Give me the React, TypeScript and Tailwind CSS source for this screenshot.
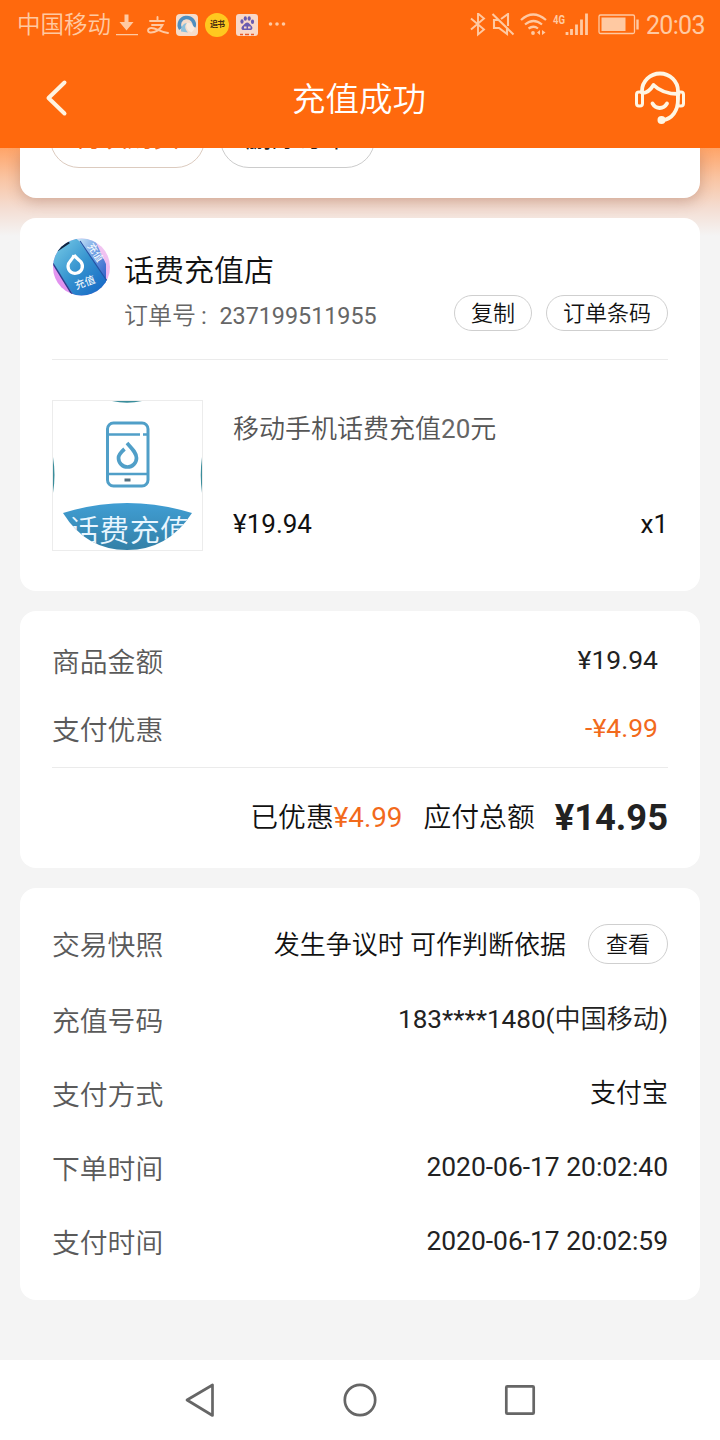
import React from "react";

const cardShell = "mx-5 rounded-2xl bg-white";

function StatusBar() {
  return (
    <div className="flex h-12 items-center pt-[2px] pl-[17px] pr-[16px] text-[#ffc9a2]">
      <span className="w-[94px] pt-px text-[23.500px] font-[350] leading-none whitespace-nowrap">中国移动</span>
      <svg className="ml-[4px] h-6 w-6" viewBox="0 0 24 24" fill="currentColor">
        <path d="M9.500 1.500h4V9h5L11.500 17.500 4.500 9h5zM1 21h22v1.300H1z" />
      </svg>
      <svg className="ml-[7px] h-6 w-6" viewBox="0 0 24 24" fill="none" stroke="currentColor" strokeWidth="1.900" strokeLinecap="round">
        <path d="M4 8h14M11.500 4v4M6 12h10.500C14.500 16.500 9 20 4 19.500 1 19 1.500 15 5.500 15c5 0 8 4 16.500 5" />
      </svg>
      <svg className="ml-[6px] h-[22px] w-[22px]" viewBox="0 0 22 22">
        <rect width="22" height="22" rx="4" fill="#f6dccb" />
        <path d="M4.500 15A7.500 7.500 0 1 1 18 13" fill="none" stroke="#4f8fc0" strokeWidth="3.500" />
        <path d="M5 17.500C5 12 8 9 11 9c-3 3-2 6 1 9.500z" fill="#8cc0dc" />
        <path d="M11 9c4-1 7 3 7.500 6l-3 3.500C12 17 9 13 11 9z" fill="#f9ebe0" />
      </svg>
      <span className="ml-[7px] flex h-6 w-6 items-center justify-center rounded-full bg-[#ffc81f] text-[8px] font-bold tracking-[-1px] text-[#4a2c10]">追书</span>
      <svg className="ml-[7px] h-[22px] w-[22px]" viewBox="0 0 22 22">
        <rect width="22" height="22" rx="3" fill="#f9d8c8" />
        <g fill="#6a5bb0">
          <ellipse cx="6" cy="7.500" rx="1.600" ry="2.200" />
          <ellipse cx="9.300" cy="4.500" rx="1.600" ry="2.300" />
          <ellipse cx="13.200" cy="4.500" rx="1.600" ry="2.300" />
          <ellipse cx="16.500" cy="7.800" rx="1.600" ry="2.200" />
          <path d="M11 8.500c2 0 3 2 4.500 3.500 2 2 .5 4.500-2 4H8.500c-3 .5-4-2-2-4C8 11 9 8.500 11 8.500z" />
        </g>
        <path d="M8 12.500h2.500v2H8zM12 12.500h2.500v2H12z" fill="#f9d8c8" />
        <path d="M4 20.500h3M9 20.500h4M15 20.500h3" stroke="#e85a28" strokeWidth="1.500" />
      </svg>
      <svg className="ml-[10px] h-4 w-[20px]" viewBox="0 0 20 16" fill="currentColor">
        <circle cx="2.500" cy="7" r="1.800" /><circle cx="9" cy="7" r="1.800" /><circle cx="15.500" cy="7" r="1.800" />
      </svg>
      <div className="flex-1" />
      <svg className="h-6 w-[176px]" viewBox="470 13 176 24" fill="none" stroke="currentColor" strokeWidth="1.900">
        <path d="M471 18.500l13 11-6 5V13.500l6 5-13 11" />
        <path d="M499 20h-5v8h5l8 6V28M501 19l7-5v12M492.500 14l21 20.500" strokeWidth="2.100" />
        <path d="M521 20q12-11 25 0M525 24.500q8.500-7 17 0M528.500 28.500q5-3.500 9.500 0" strokeWidth="2.200" />
        <circle cx="533" cy="33" r="1.900" fill="currentColor" stroke="none" />
        <path d="M540 30l-3 2.500 3 2.500zM542 30l3.500 2.500-3.500 2.500z" fill="currentColor" stroke="none" />
        <text x="553" y="23.500" fontSize="12.500" fontWeight="bold" fontFamily="Roboto, sans-serif" fill="currentColor" stroke="none" textLength="12" lengthAdjust="spacingAndGlyphs">4G</text>
        <path d="M567 32v3M571.500 29v6M576.500 24.500v10.500M581.500 19.500v15.500M586.500 13.500v21.500" strokeWidth="2.800" />
        <rect x="599" y="15" width="35.500" height="18.500" rx="1.500" strokeWidth="1.300" />
        <rect x="601.500" y="17.500" width="24" height="13.500" fill="currentColor" stroke="none" />
        <path d="M637.500 19.500v10" strokeWidth="2.400" />
      </svg>
      <span className="w-[58px] text-right text-[25px] leading-none tracking-[-0.700px] whitespace-nowrap">20:03</span>
    </div>
  );
}

function Header() {
  return (
    <div className="flex h-[100px] items-center justify-between text-white">
      <svg className="h-[100px] w-[100px]" viewBox="0 0 100 100" fill="none" stroke="#fff3e0" strokeWidth="4" strokeLinecap="round" strokeLinejoin="round">
        <path d="M64.500 34.500L48.500 50l16 15.500" />
      </svg>
      <h1 className="pt-[4px] pr-[2px] text-[33.500px] font-[350] leading-none">充值成功</h1>
      <svg className="h-[100px] w-[100px]" viewBox="620 48 100 100" fill="none" stroke="#fff6e4" strokeWidth="3.800" strokeLinecap="round" strokeLinejoin="round">
        <path d="M642 92v-1a18 17.500 0 0 1 36 0v8c0 12-6 20-15 21" />
        <path d="M642.500 93c5 0 8-3 11-8 5 5 13 9 25 9" />
        <rect x="636.500" y="92" width="6" height="14" rx="2.500" strokeWidth="3" />
        <rect x="677.500" y="92" width="6" height="14" rx="2.500" strokeWidth="3" />
        <path d="M652.500 103.500c3.500 6 11 6 14.500 0" />
        <circle cx="661.500" cy="120" r="4" fill="#fff6e4" stroke="none" />
      </svg>
    </div>
  );
}

function ShopAvatar() {
  return (
    <svg className="h-[58px] w-[58px] shrink-0" viewBox="0 0 58 58">
      <defs>
        <clipPath id="avatarClip"><circle cx="29.500" cy="29" r="28.500" /></clipPath>
        <linearGradient id="avatarPhone" x1="0" y1="0" x2="1" y2="1">
          <stop offset="0" stopColor="#7dcfe8" /><stop offset="0.500" stopColor="#3593cf" /><stop offset="1" stopColor="#1262c4" />
        </linearGradient>
        <linearGradient id="avatarBack" x1="0" y1="1" x2="1" y2="0">
          <stop offset="0" stopColor="#dd84ee" /><stop offset="1" stopColor="#f5d0f2" />
        </linearGradient>
        <linearGradient id="avatarRear" x1="0" y1="0" x2="1" y2="1">
          <stop offset="0" stopColor="#cfeaf8" /><stop offset="0.500" stopColor="#6a9be2" /><stop offset="1" stopColor="#2a56c4" />
        </linearGradient>
      </defs>
      <g clipPath="url(#avatarClip)">
        <rect width="58" height="58" fill="url(#avatarBack)" />
        <path d="M24 0h18l12 26v22L50 36z" fill="url(#avatarRear)" />
        <path d="M2 14L19 1q5-2 8 2l28 39-8 16H22L0 24z" fill="url(#avatarPhone)" />
        <path d="M0 24l21 34" stroke="#2a3f8c" strokeWidth="1.500" />
        <path d="M28 3l27 40" stroke="#2353a4" strokeWidth="1.200" />
        <path d="M5 12l12-8" stroke="#10233e" strokeWidth="3" />
        <path d="M22 17c-1 5-6 6-6 11 0 6 5 8 9 7 5-1 7-7 4-11-2-2-5-4-7-7" fill="none" stroke="#fff" strokeWidth="3.200" strokeLinejoin="round" />
        <text x="23" y="50" fill="#fff" fontSize="10.500" transform="rotate(-20 28 47)">充值</text>
        <text x="35" y="8" fill="#fff" fontSize="10" transform="rotate(57 35 8)">充值</text>
      </g>
    </svg>
  );
}

function ProductPicture() {
  return (
    <svg className="h-[151px] w-[151px] shrink-0 border border-[#ececec]" viewBox="0 0 149 149">
      <defs>
        <linearGradient id="productFill" x1="0" y1="0" x2="0" y2="1">
          <stop offset="0" stopColor="#419fd5" /><stop offset="1" stopColor="#3380a7" />
        </linearGradient>
        <clipPath id="bandClip"><path d="M10 112q64-20 129 0q-24 37-65 37T10 112z" /></clipPath>
      </defs>
      <path d="M59 0q15 3.500 30 0z" fill="#3a8d9b" />
      <path d="M0 56q3 18 0 36zM149 56q-2.500 18 0 36z" fill="#3a8d9b" />
      <g fill="none" stroke="#509fc8" strokeWidth="3">
        <rect x="54.500" y="22" width="40.500" height="63" rx="6" />
        <path d="M56 33.500h31M90 33.500h4M56 73h38" strokeWidth="2.500" />
        <path d="M71.500 48C67 52 65.500 54 65.500 57a9 9 0 0 0 18 0c0-5-4-9-9.500-15" strokeWidth="3.700" />
        <path d="M71.500 79h6" stroke="#55707f" />
      </g>
      <g clipPath="url(#bandClip)">
        <rect y="100" width="149" height="49" fill="url(#productFill)" />
        <text x="16" y="140" fill="#e9f6ff" fontSize="30" textLength="121" className="font-[350]">话费充值</text>
      </g>
    </svg>
  );
}

const pill = "flex items-center justify-center rounded-full border border-[#cfcfcf] pt-[2px] font-[350] leading-none text-[#111]";

function Label({ children }: { children: string }) {
  return <span className="text-[27.800px] font-[350] leading-[40px] text-[#5a5a5a]">{children}</span>;
}

function Row({ label, children }: { label: string; children: React.ReactNode }) {
  return (
    <div className="flex h-[74px] items-center justify-between">
      <div className="pt-[5px]"><Label>{label}</Label></div>
      {children}
    </div>
  );
}

export default function App() {
  return (
    <div className="flex h-[1440px] w-[720px] flex-col overflow-hidden bg-[#f4f4f4] font-['Roboto','Noto_Sans_CJK_SC',sans-serif] text-[#222]">
      <header className="h-[148px] shrink-0 bg-[#ff690d]">
        <StatusBar />
        <Header />
      </header>
      <main className="flex h-[1212px] shrink-0 flex-col overflow-hidden bg-[linear-gradient(to_bottom,#ffa468_0px,#f9c4a2_30px,#f4ddd2_60px,#f4f4f4_88px)]">
        <section className="mx-5 flex h-[50px] shrink-0 items-end gap-[15px] rounded-b-2xl bg-white pb-[30px] pl-[30px] shadow-[0_4px_14px_rgba(110,60,50,0.28)]">
          <div className="flex h-[20px] w-[155px] items-end overflow-hidden">
            <div className="flex h-[58px] w-full shrink-0 items-center justify-center rounded-[29px] border border-[#dccbbf] pb-[2px] text-[26px] leading-none text-[#f26a1c]">再次购买</div>
          </div>
          <div className="flex h-[20px] w-[155px] items-end overflow-hidden">
            <div className="flex h-[58px] w-full shrink-0 items-center justify-center rounded-[29px] border border-[#ccc] pb-[2px] text-[26px] leading-none">删除订单</div>
          </div>
        </section>

        <section className={cardShell + " mt-5 h-[373px] shrink-0 px-8"}>
          <div className="flex h-[142px] border-b border-[#ebebeb] pt-5">
            <ShopAvatar />
            <div className="ml-[14px] flex-1">
              <div className="pt-[15px] text-[30px] font-[350] leading-[36px] text-[#111]">话费充值店</div>
              <div className="mt-[6px] flex h-9 items-start justify-between">
                <div className="flex pt-[3px] leading-[36px] whitespace-nowrap text-[#666]">
                  <span className="w-[75px] text-[24px] font-[350]">订单号</span>
                  <span className="w-[20.500px] pl-[2px] text-[24px]">:</span>
                  <span className="text-[23.300px]">237199511955</span>
                </div>
                <div className="flex gap-[14px] text-[22px]">
                  <button className={pill + " h-9 w-[78px]"}>复制</button>
                  <button className={pill + " h-9 w-[122px]"}>订单条码</button>
                </div>
              </div>
            </div>
          </div>
          <div className="flex pt-[40px]">
            <ProductPicture />
            <div className="ml-[30px] flex flex-1 flex-col text-[26px]">
              <div className="pt-[10px] font-[350] leading-[38px] text-[#555]">移动手机话费充值<span className="font-normal text-[#666]">20</span>元</div>
              <div className="flex justify-between pt-[57px] leading-[38px] text-[#111]">
                <span>¥19.94</span>
                <span>x1</span>
              </div>
            </div>
          </div>
        </section>

        <section className={cardShell + " mt-5 h-[257px] shrink-0 px-8"}>
          <div className="flex h-[157px] flex-col border-b border-[#ebebeb] pt-[15px] pr-[10px]">
            <div className="flex h-[68px] items-center justify-between">
              <div className="pt-[5px]"><Label>商品金额</Label></div>
              <span className="text-[26.500px]">¥19.94</span>
            </div>
            <div className="flex h-[68px] items-center justify-between">
              <div className="pt-[5px]"><Label>支付优惠</Label></div>
              <span className="text-[26.500px] text-[#f26a1c]">-¥4.99</span>
            </div>
          </div>
          <div className="flex h-[99px] items-center justify-end pt-px text-[27.800px] font-[350] text-[#111]">
            <span>已优惠<span className="font-normal text-[#f26a1c]">¥4.99</span></span>
            <span className="ml-[21px]">应付总额</span>
            <span className="ml-[20px] text-[36.300px] font-bold text-[#222]">¥14.95</span>
          </div>
        </section>

        <section className={cardShell + " mt-[20px] h-[412px] shrink-0 px-8 pt-[20px]"}>
          <div className="flex h-[72px] items-center">
            <div className="pt-[3px]"><Label>交易快照</Label></div>
            <span className="ml-auto pt-[3px] text-[26px] font-[350] text-[#111]">发生争议时 可作判断依据</span>
            <button className={pill + " ml-[22px] h-10 w-20 text-[22px]"}>查看</button>
          </div>
          <div className="flex flex-col pt-[2px]">
            <Row label="充值号码">
              <span className="pt-px text-[26.100px]">183****1480(<span className="font-[350]">中国移动</span>)</span>
            </Row>
            <Row label="支付方式">
              <span className="pt-px text-[26px] font-[350] text-[#111]">支付宝</span>
            </Row>
            <Row label="下单时间">
              <span className="pt-[2px] text-[26.400px]">2020-06-17 20:02:40</span>
            </Row>
            <Row label="支付时间">
              <span className="pt-[2px] text-[26.400px]">2020-06-17 20:02:59</span>
            </Row>
          </div>
        </section>
      </main>
      <nav className="flex h-20 shrink-0 items-center justify-center gap-[120px] bg-white">
        <svg className="h-10 w-10" viewBox="0 0 40 40" fill="none" stroke="#666" strokeWidth="2.700" strokeLinejoin="round"><path d="M7 20L32.500 5v30.500z" /></svg>
        <svg className="h-10 w-10" viewBox="0 0 40 40" fill="none" stroke="#666" strokeWidth="2.700"><circle cx="20" cy="20" r="15.200" /></svg>
        <svg className="h-10 w-10" viewBox="0 0 40 40" fill="none" stroke="#666" strokeWidth="2.700" strokeLinejoin="round"><rect x="6.300" y="6.300" width="27.400" height="27.400" rx="1" /></svg>
      </nav>
    </div>
  );
}
